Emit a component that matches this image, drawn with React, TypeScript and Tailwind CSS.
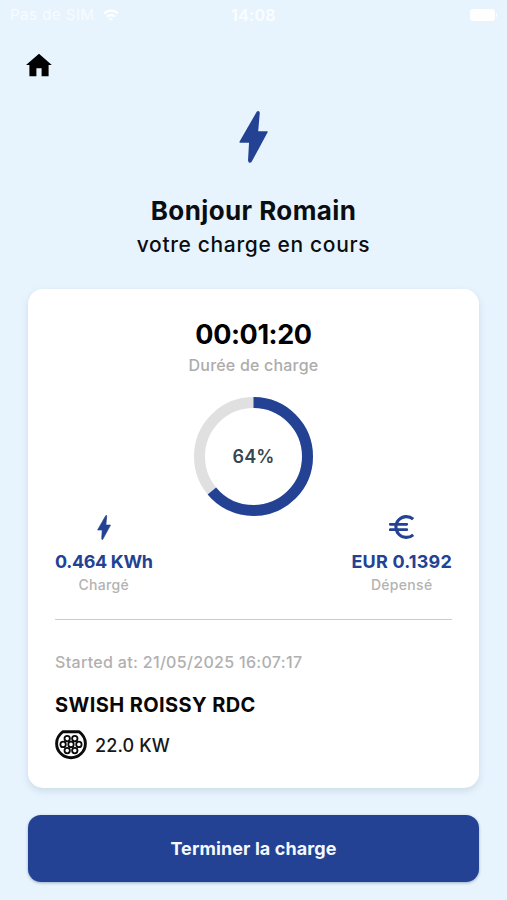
import type { ReactNode } from 'react';

const BLUE = '#234293';

interface BoltProps {
  className: string;
}

function Bolt({ className }: BoltProps) {
  return (
    <svg viewBox="0 0 28 51" className={className} fill={BLUE}>
      <path
        d="M17.8 1.2 1 30.4h9.4L9.4 48.4q0 2.2 2 1.2L27.2 20.6H17.8L19.4 2Q19.4 0 17.8 1.2Z"
        stroke={BLUE}
        strokeWidth="1.5"
        strokeLinejoin="round"
      />
    </svg>
  );
}

function EuroIcon() {
  return (
    <svg viewBox="0 0 26 26" className="h-[26px] w-[26px]" fill="none" stroke={BLUE} strokeWidth="3.1">
      <path d="M24.2 5.2A10.4 10.4 0 1 0 24.2 20.8" />
      <path d="M1.2 10.3h16.6M1.2 15.7h16.6" strokeWidth="2.7" strokeLinecap="round" />
    </svg>
  );
}

const PINS = [
  [12.2, 8.6],
  [19.8, 8.6],
  [8.1, 14.4],
  [16, 14.4],
  [23.9, 14.4],
  [12.2, 20.6],
  [19.8, 20.6],
];

function Type2Plug() {
  return (
    <svg viewBox="0 0 32 30" className="h-[30px] w-8" fill="none" stroke="#0b0b0b">
      <path d="M7.7 1.8h16.6C28 4.6 30.4 8.6 30.4 13.4a14.4 14.4 0 0 1-28.8 0C1.6 8.6 4 4.6 7.7 1.8Z" strokeWidth="2.9" strokeLinejoin="round" />
      {PINS.map(([x, y]) => (
        <circle key={`${x}-${y}`} cx={x} cy={y} r="2.7" strokeWidth="1.8" />
      ))}
    </svg>
  );
}

/** Circular gauge, starts at noon and fills clockwise. */
function Gauge({ percent }: { percent: number }) {
  return (
    <div className="relative mt-[20px] h-[119px] w-[119px]">
      <svg viewBox="0 0 119 119" className="h-full w-full -rotate-90" fill="none" strokeWidth="11">
        <circle cx="59.5" cy="59.5" r="54" stroke="#e0e0e0" />
        <circle cx="59.5" cy="59.5" r="54" stroke={BLUE} pathLength={100} strokeDasharray={`${percent} 100`} />
      </svg>
      <span className="absolute inset-0 flex items-center justify-center text-[18px] font-semibold tracking-[0.1px] text-[#37474f]">
        {percent}%
      </span>
    </div>
  );
}

interface StatProps {
  icon: ReactNode;
  value: ReactNode;
  label: string;
}

function Stat({ icon, value, label }: StatProps) {
  return (
    <div className="flex flex-col items-center">
      <div className="flex h-[26px] items-center">{icon}</div>
      <span className="mt-[10px] text-[18px] leading-6 font-bold whitespace-nowrap text-[#234293]">{value}</span>
      <span className="text-[14px] leading-[22px] font-medium tracking-[0.3px] text-[#b3b3b3]">{label}</span>
    </div>
  );
}

function StatusBar() {
  return (
    <div className="flex h-[30px] items-center justify-between px-[10px] text-[15px] text-white/70">
      <div className="flex flex-1 items-center gap-2">
        <span className="tracking-[0.5px] whitespace-nowrap">Pas de SIM</span>
        <svg viewBox="0 0 16 12" className="h-3 w-4" fill="none" stroke="#fff" strokeWidth="2.4">
          <path d="M1 4.4q7-6 14 0M4 7.6q4-3.4 8 0" />
          <path d="m6.5 9.6 1.5 1.8 1.5-1.8Z" fill="#fff" strokeWidth="0.6" />
        </svg>
      </div>
      <span className="text-[16px] font-semibold tracking-[0.3px] text-white/80">14:08</span>
      <div className="flex flex-1 items-center justify-end gap-px">
        <span className="h-3 w-[25px] rounded-[3px] bg-white" />
        <span className="h-1 w-px rounded-r bg-white" />
      </div>
    </div>
  );
}

export default function App() {
  return (
    <div className="flex h-[900px] w-[507px] flex-col overflow-hidden bg-[#e7f4fe] font-[Inter,sans-serif] text-[#0b0e10]">
      <StatusBar />

      <div className="pt-[23px] pl-[26px]">
        <svg viewBox="0 0 26 24" className="h-6 w-[26px]" fill="#000">
          <path d="M13 .7 25.8 12H22.6v11.3h-7v-8h-5.2v8h-7V12H0Z" />
        </svg>
      </div>

      <header className="flex flex-col items-center pt-[34px]">
        <Bolt className="h-[52px] w-[29px]" />
        <h1 className="mt-[31px] text-[26px] leading-[34px] font-bold tracking-[0.4px]">Bonjour Romain</h1>
        <p className="mt-px text-[21px] leading-[32px] font-medium tracking-[0.64px]">votre charge en cours</p>
      </header>

      <main className="mx-7 mt-[28px] flex h-[499px] shrink-0 flex-col rounded-[15px] bg-white px-[27px] shadow-[0_3px_7px_rgba(40,70,90,0.14)]">
        <div className="flex flex-col items-center pt-[29px]">
          <span className="text-[27px] leading-[34px] font-bold tracking-[-0.4px] text-black">00:01:20</span>
          <span className="mt-px text-[16px] leading-6 font-medium tracking-[0.2px] text-[#acacac]">Durée de charge</span>
          <Gauge percent={64} />
        </div>

        <div className="-mt-[2px] flex justify-between">
          <Stat icon={<Bolt className="h-[25px] w-[14px]" />} value={<span className="tracking-[-0.35px]">0.464 KWh</span>} label="Chargé" />
          <Stat icon={<EuroIcon />} value={<span className="tracking-[0.2px]">EUR 0.1392</span>} label="Dépensé" />
        </div>

        <hr className="mt-[23px] border-t-[1.5px] border-[#cccccc]" />

        <p className="mt-[30px] text-[16px] leading-6 font-medium tracking-[0.32px] text-[#b0b0b0]">
          Started at: 21/05/2025 16:07:17
        </p>
        <h2 className="mt-[17px] text-[20px] leading-[28px] font-bold tracking-[0.4px] text-[#080808]">SWISH ROISSY RDC</h2>
        <div className="mt-[11px] flex items-center gap-2">
          <Type2Plug />
          <span className="text-[18px] font-medium tracking-[0.15px] text-[#171717]">22.0 KW</span>
        </div>
      </main>

      <button className="mx-7 mt-[27px] h-[67px] shrink-0 rounded-[13px] bg-[#234293] pb-px text-[18px] font-bold tracking-[0.1px] text-[#f4f8ff] shadow-[0_1px_3px_rgba(20,40,80,0.35)]">
        Terminer la charge
      </button>
    </div>
  );
}
